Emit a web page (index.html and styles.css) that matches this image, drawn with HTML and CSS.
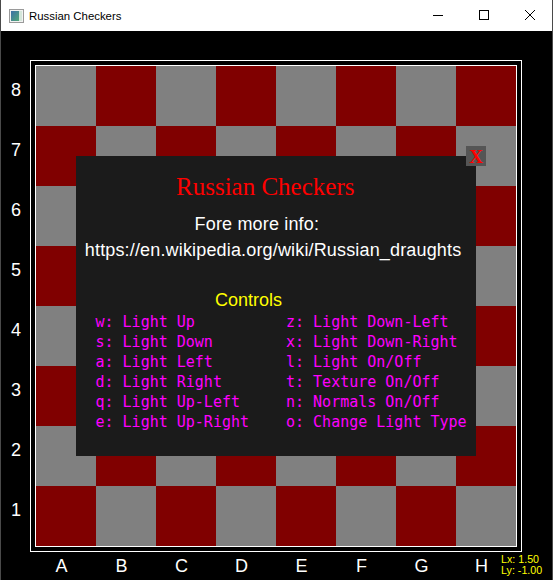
FILE: index.html
```html
<!DOCTYPE html>
<html>
<head>
<meta charset="utf-8">
<title>Russian Checkers</title>
<link rel="stylesheet" href="styles.css">
</head>
<body>
<div class="window">
  <header class="titlebar">
    <svg class="app-icon" width="15" height="14" viewBox="0 0 15 14">
      <defs>
        <linearGradient id="ig" x1="0" y1="0" x2="1" y2="1">
          <stop offset="0" stop-color="#3d6fa8"/>
          <stop offset="1" stop-color="#52a878"/>
        </linearGradient>
      </defs>
      <rect x="0.5" y="0.5" width="14" height="13" fill="#f2f2f2" stroke="#9a9a9a"/>
      <rect x="2" y="2" width="8" height="10" fill="url(#ig)"/>
      <rect x="10" y="2" width="3" height="10" fill="#d4e6da"/>
    </svg>
    <span class="title">Russian Checkers</span>
    <div class="controls">
      <div class="ctl"><svg width="46" height="31" viewBox="0 0 46 31"><line x1="18" y1="15.5" x2="28" y2="15.5" stroke="#000" stroke-width="1"/></svg></div>
      <div class="ctl"><svg width="46" height="31" viewBox="0 0 46 31"><rect x="18.5" y="10.5" width="9" height="9" fill="none" stroke="#000" stroke-width="1"/></svg></div>
      <div class="ctl"><svg width="46" height="31" viewBox="0 0 46 31"><path d="M18 10 L28 20 M28 10 L18 20" stroke="#000" stroke-width="1"/></svg></div>
    </div>
  </header>
  <main class="client">
    <div class="board-area">
      <div class="ranks">
        <div class="rank">8</div><div class="rank">7</div><div class="rank">6</div><div class="rank">5</div>
        <div class="rank">4</div><div class="rank">3</div><div class="rank">2</div><div class="rank">1</div>
      </div>
      <div class="board-col">
        <div class="frame">
          <div class="inner">
            <div class="grid">
              <div class="sq g"></div><div class="sq r"></div><div class="sq g"></div><div class="sq r"></div><div class="sq g"></div><div class="sq r"></div><div class="sq g"></div><div class="sq r"></div>
              <div class="sq r"></div><div class="sq g"></div><div class="sq r"></div><div class="sq g"></div><div class="sq r"></div><div class="sq g"></div><div class="sq r"></div><div class="sq g"></div>
              <div class="sq g"></div><div class="sq r"></div><div class="sq g"></div><div class="sq r"></div><div class="sq g"></div><div class="sq r"></div><div class="sq g"></div><div class="sq r"></div>
              <div class="sq r"></div><div class="sq g"></div><div class="sq r"></div><div class="sq g"></div><div class="sq r"></div><div class="sq g"></div><div class="sq r"></div><div class="sq g"></div>
              <div class="sq g"></div><div class="sq r"></div><div class="sq g"></div><div class="sq r"></div><div class="sq g"></div><div class="sq r"></div><div class="sq g"></div><div class="sq r"></div>
              <div class="sq r"></div><div class="sq g"></div><div class="sq r"></div><div class="sq g"></div><div class="sq r"></div><div class="sq g"></div><div class="sq r"></div><div class="sq g"></div>
              <div class="sq g"></div><div class="sq r"></div><div class="sq g"></div><div class="sq r"></div><div class="sq g"></div><div class="sq r"></div><div class="sq g"></div><div class="sq r"></div>
              <div class="sq r"></div><div class="sq g"></div><div class="sq r"></div><div class="sq g"></div><div class="sq r"></div><div class="sq g"></div><div class="sq r"></div><div class="sq g"></div>
            </div>
          </div>
        </div>
        <div class="files">
          <div class="file">A</div><div class="file">B</div><div class="file">C</div><div class="file">D</div>
          <div class="file">E</div><div class="file">F</div><div class="file">G</div><div class="file">H</div>
        </div>
      </div>
    </div>

    <section class="dialog">
      <div class="close-btn">X</div>
      <div class="dlg-title">Russian Checkers</div>
      <div class="dlg-info info-1">Fore more info:</div>
      <div class="dlg-info info-2">https://en.wikipedia.org/wiki/Russian_draughts</div>
      <div class="dlg-controls">Controls</div>
      <div class="keys">
        <div>w: Light Up</div><div>z: Light Down-Left</div>
        <div>s: Light Down</div><div>x: Light Down-Right</div>
        <div>a: Light Left</div><div>l: Light On/Off</div>
        <div>d: Light Right</div><div>t: Texture On/Off</div>
        <div>q: Light Up-Left</div><div>n: Normals On/Off</div>
        <div>e: Light Up-Right</div><div>o: Change Light Type</div>
      </div>
    </section>

    <div class="light-info">Lx: 1.50<br>Ly: -1.00</div>
  </main>
</div>
</body>
</html>
```
FILE: styles.css
```css
* { box-sizing: border-box; }
html, body { margin: 0; padding: 0; background: #000; }
body { width: 553px; height: 580px; overflow: hidden; }

.window {
  width: 553px;
  height: 580px;
  display: flex;
  flex-direction: column;
  border-left: 1px solid #4a4a4a;
  border-right: 1px solid #4a4a4a;
  background: #000;
}

.titlebar {
  height: 31px;
  flex: none;
  background: #fff;
  display: flex;
  align-items: center;
  padding-left: 8px;
}
.app-icon { display: block; margin-top: 1px; }
.title {
  margin-left: 5px;
  font-family: "Liberation Sans", Arial, sans-serif;
  font-size: 11.4px;
  color: #000;
  padding-top: 1px;
}
.controls { margin-left: auto; display: flex; margin-right: -1px; }
.ctl { width: 46px; height: 31px; }
.ctl svg { display: block; }

.client {
  position: relative;
  flex: 1;
  background: #000;
  font-family: "Liberation Sans", Arial, sans-serif;
  color: #fff;
}

.board-area {
  display: flex;
  padding-top: 29px;
}

.ranks {
  width: 29px;
  padding-top: 19.8px;
  display: flex;
  flex-direction: column;
}
.rank {
  height: 60px;
  line-height: 20px;
  font-size: 18px;
  text-align: center;
  padding-left: 1px;
}

.board-col { display: flex; flex-direction: column; }

.frame {
  border: 1px solid #fff;
  padding: 4px;
  width: 492px;
}
.inner { border: 1px solid #fff; }
.grid {
  display: grid;
  grid-template-columns: repeat(8, 60px);
  grid-template-rows: repeat(8, 60px);
}
.sq.g { background: #808080; }
.sq.r { background: #800000; }

.files {
  display: grid;
  grid-template-columns: repeat(8, 60px);
  margin-left: 6px;
  margin-top: 3.8px;
}
.file {
  font-size: 18px;
  line-height: 20px;
  text-align: center;
  padding-right: 9px;
}

.dialog {
  position: absolute;
  left: 75px;
  top: 125px;
  width: 400px;
  height: 300px;
  background: #1b1b1b;
  padding-top: 17.3px;
}

.close-btn {
  position: absolute;
  left: 390px;
  top: -10px;
  width: 20px;
  height: 20px;
  background: #555;
  color: #f00;
  font-family: "Liberation Serif", "Times New Roman", serif;
  font-weight: bold;
  font-size: 19px;
  line-height: 22px;
  text-align: center;
}

.dlg-title {
  font-family: "Liberation Serif", "Times New Roman", serif;
  font-size: 25px;
  line-height: 28px;
  color: #f00;
  padding-left: 100px;
  white-space: nowrap;
}

.dlg-info {
  font-size: 18px;
  line-height: 26px;
  color: #fff;
  white-space: nowrap;
  letter-spacing: 0.16px;
}
.info-1 { margin-top: 10.2px; padding-left: 118.6px; }
.info-2 { padding-left: 8.8px; }

.dlg-controls {
  margin-top: 24.3px;
  font-size: 18px;
  line-height: 24px;
  color: #ff0;
  padding-left: 139px;
}

.keys {
  display: grid;
  grid-template-columns: 190.5px 1fr;
  grid-auto-rows: 20px;
  padding-left: 19.5px;
  font-family: "DejaVu Sans Mono", "Liberation Mono", monospace;
  font-size: 15px;
  line-height: 20px;
  color: #f0f;
  white-space: nowrap;
}

.light-info {
  position: absolute;
  left: 500px;
  top: 523.3px;
  font-size: 10.7px;
  line-height: 11px;
  color: #ff0;
  white-space: nowrap;
}
```
